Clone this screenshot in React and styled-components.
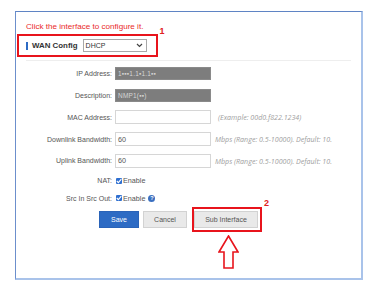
import styled, { createGlobalStyle } from "styled-components";

const GlobalStyle = createGlobalStyle`
  html, body {
    margin: 0;
    padding: 0;
    background: #ffffff;
  }
  body {
    font-family: "Liberation Sans", Arial, sans-serif;
  }
`;

export default function App() {
  return (
    <>
      <GlobalStyle />
      <Page>
        <Panel>
          <TopHint>
            <HintText>Click the interface to configure it.</HintText>
            <StepNumber>1</StepNumber>
          </TopHint>
          <WanBox>
            <BlueBar />
            <WanTitle>WAN Config</WanTitle>
            <Select>
              <span>DHCP</span>
              <svg width="7" height="5" viewBox="0 0 7 5">
                <path d="M1 1 L3.5 3.5 L6 1" fill="none" stroke="#444" strokeWidth="1.2" />
              </svg>
            </Select>
          </WanBox>
          <Divider />
          <Form>
            <Row h={22}>
              <Label>IP Address:</Label>
              <MaskedField>1▪▪▪1.1▪1.1▪▪</MaskedField>
            </Row>
            <Row h={22}>
              <Label>Description:</Label>
              <MaskedField>NMP1(▪▪)</MaskedField>
            </Row>
            <Row h={22}>
              <Label>MAC Address:</Label>
              <Field />
              <Note $ml={7}>(Example: 00d0.f822.1234)</Note>
            </Row>
            <Row h={22}>
              <Label>Downlink Bandwidth:</Label>
              <Field>60</Field>
              <Note $ml={4}>Mbps (Range: 0.5-10000). Default: 10.</Note>
            </Row>
            <Row h={21}>
              <Label>Uplink Bandwidth:</Label>
              <Field>60</Field>
              <Note $ml={4}>Mbps (Range: 0.5-10000). Default: 10.</Note>
            </Row>
            <Row h={19}>
              <Label>NAT:</Label>
              <Check />
              <CheckText>Enable</CheckText>
            </Row>
            <Row h={16}>
              <Label>Src In Src Out:</Label>
              <Check />
              <CheckText>Enable</CheckText>
              <HelpIcon>?</HelpIcon>
            </Row>
          </Form>
          <Buttons>
            <Button $primary>Save</Button>
            <Button $w={44}>Cancel</Button>
            <RedBox>
              <Button $w={64}>Sub Interface</Button>
              <BoxNumber>2</BoxNumber>
              <Arrow width="21" height="35" viewBox="0 0 21 35">
                <path
                  d="M10.5 1 L20 17 L15 17 L15 33 L6 33 L6 17 L1 17 Z"
                  fill="#ffffff"
                  stroke="#e8141c"
                  strokeWidth="1.6"
                  strokeLinejoin="miter"
                />
              </Arrow>
            </RedBox>
          </Buttons>
        </Panel>
      </Page>
    </>
  );
}

function Check() {
  return (
    <CheckBox>
      <svg width="6" height="6" viewBox="0 0 6 6">
        <path d="M0.8 3 L2.4 4.6 L5.3 1.2" fill="none" stroke="#fff" strokeWidth="1.2" />
      </svg>
    </CheckBox>
  );
}

const Page = styled.div`
  width: 376px;
  height: 288px;
  padding: 11px 0 0 15px;
  box-sizing: border-box;
`;

const Panel = styled.div`
  width: 348px;
  height: 269px;
  box-sizing: border-box;
  border-top: 1px solid #5f84c4;
  border-left: 1px solid #6c8fcc;
  border-right: 2px solid #a9c3ea;
  border-bottom: 2px solid #a9c3ea;
  display: flex;
  flex-direction: column;
`;

const TopHint = styled.div`
  height: 21px;
  display: flex;
  align-items: flex-end;
  padding-left: 10px;
  white-space: nowrap;
`;

const HintText = styled.span`
  color: #ea2a2a;
  font-size: 8.1px;
  line-height: 12px;
`;

const StepNumber = styled.span`
  color: #e02020;
  font-weight: 700;
  font-size: 9px;
  margin-left: 16px;
  margin-bottom: -3px;
`;

const WanBox = styled.div`
  margin: 1px 0 0 1px;
  width: 141px;
  height: 23px;
  box-sizing: border-box;
  border: 2px solid #e8141c;
  display: flex;
  align-items: center;
  padding-left: 7px;
  white-space: nowrap;
`;

const BlueBar = styled.span`
  width: 2px;
  height: 8px;
  background: #2d6bc4;
  flex-shrink: 0;
`;

const WanTitle = styled.span`
  font-size: 7.9px;
  font-weight: 700;
  color: #333;
  margin-left: 4px;
`;

const Select = styled.div`
  margin-left: 5px;
  width: 64px;
  height: 13px;
  flex-shrink: 0;
  box-sizing: border-box;
  border: 1px solid #a8a8a8;
  display: flex;
  align-items: center;
  justify-content: space-between;
  padding: 0 3px 0 2px;
  font-size: 7px;
  color: #333;
`;

const Divider = styled.div`
  margin: 3px 10px 0 10px;
  height: 1px;
  background: #eeeeee;
`;

const Form = styled.div`
  display: flex;
  flex-direction: column;
  margin-top: 1px;
`;

const Row = styled.div`
  height: ${(p) => p.h}px;
  display: flex;
  align-items: center;
`;

const Label = styled.span`
  width: 99px;
  text-align: right;
  padding-right: 3px;
  box-sizing: border-box;
  font-size: 7px;
  color: #555;
  flex-shrink: 0;
  white-space: nowrap;
`;

const Field = styled.div`
  width: 96px;
  height: 14px;
  box-sizing: border-box;
  border: 1px solid #d6d6d6;
  font-size: 7.2px;
  color: #555;
  padding-left: 2px;
  display: flex;
  align-items: center;
  flex-shrink: 0;
`;

const MaskedField = styled(Field)`
  height: 13px;
  background: #7d7d7d;
  border-color: #8a8a8a;
  color: #d5d5d5;
  font-size: 6.5px;
  letter-spacing: 0.2px;
`;

const Note = styled.span`
  margin-left: ${(p) => p.$ml}px;
  font-family: "Open Sans", "Liberation Sans", sans-serif;
  font-size: 7.1px;
  font-style: italic;
  color: #a0a0a0;
  white-space: nowrap;
`;

const CheckBox = styled.span`
  width: 6px;
  height: 6px;
  background: #2f6fd0;
  border-radius: 1px;
  display: flex;
  align-items: center;
  justify-content: center;
  margin-left: 1px;
`;

const CheckText = styled.span`
  font-size: 7.2px;
  color: #555;
  margin-left: 1px;
`;

const HelpIcon = styled.span`
  width: 7px;
  height: 7px;
  border-radius: 50%;
  background: #3a6fc0;
  color: #fff;
  font-size: 5.5px;
  font-weight: 700;
  display: flex;
  align-items: center;
  justify-content: center;
  margin-left: 3px;
`;

const Buttons = styled.div`
  display: flex;
  align-items: flex-start;
  padding-left: 83px;
  margin-top: 1px;
  gap: 4px;
`;

const Button = styled.div`
  width: ${(p) => p.$w || 40}px;
  height: 17px;
  margin-top: 4px;
  box-sizing: border-box;
  display: flex;
  align-items: center;
  justify-content: center;
  font-size: 7px;
  color: ${(p) => (p.$primary ? "#ffffff" : "#555555")};
  background: ${(p) => (p.$primary ? "#2d6bc4" : "#e9e9e9")};
  border: 1px solid ${(p) => (p.$primary ? "#2a63b8" : "#d2d2d2")};
`;

const RedBox = styled.div`
  position: relative;
  width: 70px;
  height: 25px;
  box-sizing: border-box;
  border: 2px solid #e8141c;
  margin-left: 1px;

  ${Button} {
    margin-top: 2px;
  }
`;

const BoxNumber = styled.span`
  position: absolute;
  right: -9px;
  top: -11px;
  color: #e02020;
  font-weight: 700;
  font-size: 9px;
`;

const Arrow = styled.svg`
  position: absolute;
  left: 24px;
  top: 26px;
`;
